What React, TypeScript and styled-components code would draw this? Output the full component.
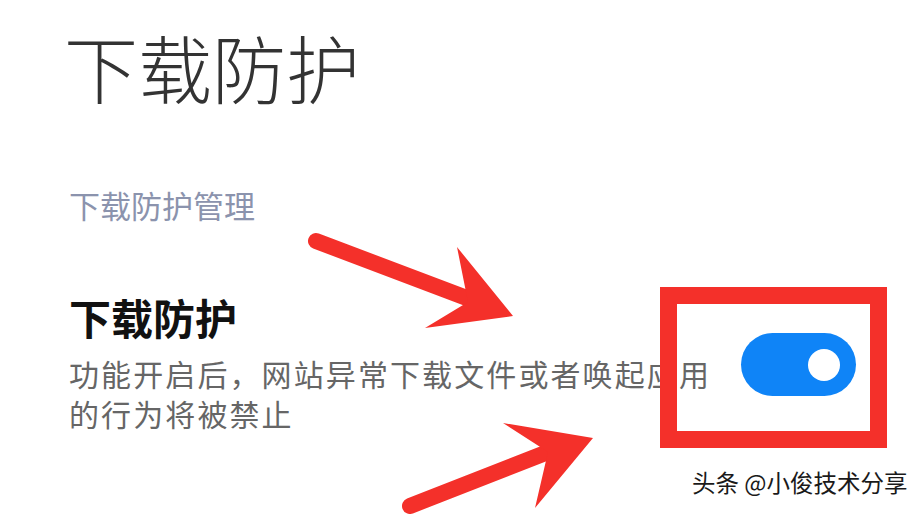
import React from 'react';
import styled, { createGlobalStyle } from 'styled-components';

const GlobalStyle = createGlobalStyle`
  html, body {
    margin: 0;
    padding: 0;
    background: #ffffff;
  }
  body {
    font-family: "Noto Sans CJK SC", "Noto Sans", sans-serif;
  }
`;

const Page = styled.div`
  position: relative;
  width: 923px;
  height: 514px;
  overflow: hidden;
  background: #ffffff;
  padding-left: 64px;
  box-sizing: border-box;
`;

const PageTitle = styled.h1`
  margin: 29px 0 0 0;
  font-size: 74px;
  line-height: 74px;
  font-weight: 300;
  color: #333333;
`;

const SectionLabel = styled.div`
  margin-top: 86px;
  padding-left: 5px;
  font-size: 31px;
  line-height: 31px;
  color: #8b93ad;
`;

const SettingRow = styled.div`
  margin-top: 76px;
  padding-left: 5px;
  display: flex;
  align-items: center;
`;

const SettingText = styled.div`
  width: 660px;
  flex-shrink: 0;
`;

const SettingTitle = styled.div`
  font-size: 42px;
  line-height: 42px;
  font-weight: 700;
  color: #111111;
`;

const SettingDesc = styled.div`
  margin-top: 15px;
  width: 655px;
  font-size: 30px;
  line-height: 40px;
  letter-spacing: 2.1px;
  color: #666666;
`;

const Toggle = styled.div<{ $on: boolean }>`
  margin-left: 12px;
  width: 115px;
  height: 63px;
  border-radius: 32px;
  background: ${p => (p.$on ? '#0f84f7' : '#d8d8d8')};
  display: flex;
  align-items: center;
  justify-content: ${p => (p.$on ? 'flex-end' : 'flex-start')};
  padding: 0 16px;
  box-sizing: border-box;
`;

const Knob = styled.div`
  width: 32px;
  height: 32px;
  border-radius: 50%;
  background: #ffffff;
`;

const Highlight = styled.div`
  position: absolute;
  left: 660px;
  top: 287px;
  width: 227px;
  height: 161px;
  box-sizing: border-box;
  border: 17px solid #f4302a;
  pointer-events: none;
`;

const Marks = styled.svg`
  position: absolute;
  left: 0;
  top: 0;
  pointer-events: none;
`;

const Watermark = styled.div`
  position: absolute;
  left: 692px;
  top: 466px;
  font-size: 23.5px;
  line-height: 32px;
  color: #1a1a1a;
  text-shadow: 1px 1px 0 #ffffff, -1px -1px 0 #ffffff, 1px -1px 0 #ffffff, -1px 1px 0 #ffffff;
`;

const RED = '#f4302a';

const App: React.FC = () => {
  return (
    <>
      <GlobalStyle />
      <Page>
        <PageTitle>下载防护</PageTitle>
        <SectionLabel>下载防护管理</SectionLabel>
        <SettingRow>
          <SettingText>
            <SettingTitle>下载防护</SettingTitle>
            <SettingDesc>功能开启后，网站异常下载文件或者唤起应用的行为将被禁止</SettingDesc>
          </SettingText>
          <Toggle $on>
            <Knob />
          </Toggle>
        </SettingRow>

        <Highlight />

        <Marks width="923" height="514" viewBox="0 0 923 514">
          {/* upper arrow */}
          <line x1="316" y1="241" x2="472" y2="300" stroke={RED} strokeWidth="16" strokeLinecap="round" />
          <polygon points="457,247 513,316 425,328 468,302" fill={RED} />
          {/* lower arrow */}
          <line x1="410" y1="506" x2="548" y2="452" stroke={RED} strokeWidth="16" strokeLinecap="round" />
          <polygon points="503,423 593,438 535,508 548,452" fill={RED} />
        </Marks>

        <Watermark>头条 @小俊技术分享</Watermark>
      </Page>
    </>
  );
};

export default App;
